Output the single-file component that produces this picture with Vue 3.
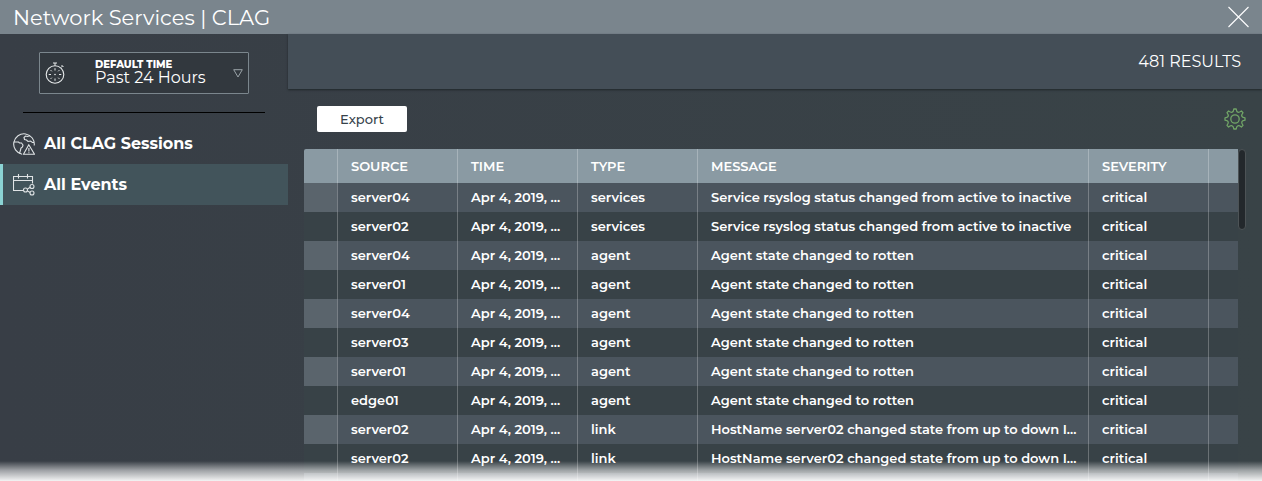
<script setup>
import { ref } from 'vue'

const range = ref('Past 24 Hours')
const columns = ['SOURCE', 'TIME', 'TYPE', 'MESSAGE', 'SEVERITY']
const time = 'Apr 4, 2019, ...'
const rsyslog = 'Service rsyslog status changed from active to inactive'
const rotten = 'Agent state changed to rotten'
const down = 'HostName server02 changed state from up to down I...'
const events = [
  ['server04', time, 'services', rsyslog, 'critical'],
  ['server02', time, 'services', rsyslog, 'critical'],
  ['server04', time, 'agent', rotten, 'critical'],
  ['server01', time, 'agent', rotten, 'critical'],
  ['server04', time, 'agent', rotten, 'critical'],
  ['server03', time, 'agent', rotten, 'critical'],
  ['server01', time, 'agent', rotten, 'critical'],
  ['edge01', time, 'agent', rotten, 'critical'],
  ['server02', time, 'link', down, 'critical'],
  ['server02', time, 'link', down, 'critical'],
  ['', '', '', '', ''],
]
</script>

<template>
  <div class="page">
    <header class="titlebar">
      <h1>Network Services | CLAG</h1>
      <button class="icon-button" aria-label="Close">
        <svg width="22" height="22" viewBox="0 0 22 22" fill="none" stroke="#fff" stroke-width="1.1">
          <path d="M1.500 1l20 20M21.500 1l-20 20" />
        </svg>
      </button>
    </header>

    <div class="body">
      <aside class="sidebar">
        <div class="picker">
          <svg class="clock" width="20" height="24" viewBox="0 0 20 24" fill="none" stroke="#e6e9ea">
            <circle cx="10" cy="13.5" r="8.8" stroke-width="1.1" />
            <path d="M10 4.7V2M8 2h4M16 6.500l1.500-1.500M16.500 4l2 2" />
            <path d="M10 7.200v2.300M10 17.500v2.300M3.700 13.500H6M14 13.500h2.300M5.600 9.100l1.200 1.200M13.200 16.700l1.200 1.200M14.400 9.100l-1.200 1.200M6.800 16.700l-1.200 1.200" />
            <circle cx="10" cy="13.500" r="0.800" fill="#e6e9ea" stroke="none" />
          </svg>
          <div class="picker-text">
            <label for="range">DEFAULT TIME</label>
            <select id="range" v-model="range">
              <option>Past 24 Hours</option>
            </select>
          </div>
          <svg class="arrow" width="10" height="9" viewBox="0 0 10 9" fill="none" stroke="#9aa3a8">
            <path d="M.7.700h8.600L5 8z" />
          </svg>
        </div>
        <nav>
          <a href="#sessions">
            <svg width="22" height="22" viewBox="0 0 22 22" fill="none" stroke="#dfe3e5" stroke-width="1.100">
              <path d="M9 21.200A10.300 10.300 0 1 1 21.200 12.500" />
              <path d="M.8 9h4.700l1 1h2l1.500 2-.5 2-1.500 1-.5 2-1 3.500M17 2.700l-2.500.8-2-.5-1.500 1.500.5 2 2 .5 1.500 1.500 2.500-.5 2 1.500h1.500" />
              <path d="M15.800 11.800L10.500 21.300h11z" />
              <path d="M15.900 15v3.500M15.900 19.200v1" />
            </svg>
            All CLAG Sessions
          </a>
          <a href="#events" class="active" aria-current="page">
            <svg width="22" height="22" viewBox="0 0 22 22" fill="none" stroke="#dfe3e5" stroke-width="1.100">
              <path d="M10 16.500H.5v-14h19v7M.5 6.500h19M5.500 0v4.500M14.500 0v4.500M14.500 15l2.700-1.700M14.500 17l2.700 1.500" />
              <circle cx="12.500" cy="16" r="2" />
              <circle cx="19" cy="12.500" r="2" />
              <circle cx="19" cy="19" r="2" />
            </svg>
            All Events
          </a>
        </nav>
      </aside>

      <main>
        <div class="results">481 RESULTS</div>
        <div class="toolbar">
          <button class="export">Export</button>
          <button class="icon-button" aria-label="Table settings">
            <svg width="22" height="22" viewBox="0 0 22 22" fill="none" stroke="#71a567" stroke-width="1.300" stroke-linejoin="round">
              <path d="M9.800 1h2.400Q12.500 3.800 13.800 4.200Q15 4.700 17.400 3L19 4.600Q17.300 7 17.800 8.200Q18.200 9.500 21 9.800V12.200Q18.200 12.500 17.800 13.800Q17.300 15 19 17.400L17.400 19Q15 17.300 13.800 17.800Q12.500 18.200 12.200 21H9.800Q9.500 18.200 8.200 17.800Q7 17.300 4.600 19L3 17.400Q4.700 15 4.200 13.800Q3.800 12.500 1 12.200V9.800Q3.800 9.500 4.200 8.200Q4.700 7 3 4.600L4.600 3Q7 4.700 8.200 4.200Q9.500 3.800 9.800 1z" />
              <circle cx="11" cy="11" r="4.200" />
            </svg>
          </button>
        </div>
        <div class="table-area">
          <table>
            <colgroup>
              <col class="c-mark" />
              <col class="c-std" />
              <col class="c-std" />
              <col class="c-std" />
              <col />
              <col class="c-std" />
              <col class="c-end" />
            </colgroup>
            <thead>
              <tr>
                <td></td>
                <th v-for="c in columns" :key="c" scope="col">{{ c }}</th>
                <td></td>
              </tr>
            </thead>
            <tbody>
              <tr v-for="(row, i) in events" :key="i">
                <td></td>
                <td v-for="(cell, j) in row" :key="j">{{ cell }}</td>
                <td></td>
              </tr>
            </tbody>
          </table>
          <div class="thumb"></div>
        </div>
      </main>
    </div>
    <div class="fade"></div>
  </div>
</template>

<style>
body {
  margin: 0;
}
</style>

<style scoped>
.page {
  position: relative;
  display: flex;
  flex-direction: column;
  height: 100vh;
  overflow: hidden;
  color: #fff;
  font-family: Montserrat, Inter, "Open Sans", sans-serif;
  background: linear-gradient(90deg, #383e46, #394347);
}
* {
  box-sizing: border-box;
}
button,
select {
  font-family: inherit;
}
.titlebar {
  display: flex;
  flex: none;
  align-items: center;
  justify-content: space-between;
  height: 34px;
  padding: 0 13px;
  background: #7a858d;
}
h1 {
  margin: 0;
  padding-top: 2px;
  font-size: 21px;
  font-weight: 400;
  line-height: 32px;
}
.icon-button {
  display: flex;
  padding: 0;
  border: 0;
  background: none;
  cursor: pointer;
}
.body {
  display: flex;
  flex: 1;
  min-height: 0;
}
.sidebar {
  flex: none;
  width: 288px;
}
.picker {
  display: flex;
  align-items: center;
  width: 210px;
  height: 42px;
  margin: 18px 0 0 39px;
  border: 1px solid #7b868d;
  border-radius: 1px;
  background: #32383e;
}
.clock {
  flex: none;
  margin-left: 5px;
}
.picker-text {
  flex: 1;
  margin-left: 30px;
}
.picker label {
  display: block;
  font-size: 10px;
  font-weight: 800;
  line-height: 10px;
}
.picker select {
  display: block;
  width: 100%;
  height: 16px;
  padding: 0;
  border: 0;
  appearance: none;
  color: #fff;
  background: none;
  font-size: 16px;
  line-height: 16px;
}
.arrow {
  flex: none;
  margin-right: 5px;
}
nav {
  margin-top: 18px;
}
nav::before {
  content: "";
  display: block;
  height: 1px;
  margin: 0 23px 10px;
  background: #000;
}
nav a {
  display: flex;
  align-items: center;
  gap: 9px;
  height: 41px;
  padding-left: 10px;
  border-left: 3px solid transparent;
  color: #fff;
  font-size: 16px;
  font-weight: 700;
  text-decoration: none;
}
nav a.active {
  border-left-color: #8bd3d4;
  background: #42545b;
}
main {
  display: flex;
  flex: 1;
  flex-direction: column;
  min-width: 0;
}
.results {
  flex: none;
  height: 55px;
  padding-right: 21px;
  background: #444e57;
  box-shadow: 0 1px 2px #20272a;
  font-size: 16px;
  line-height: 55px;
  text-align: right;
}
.toolbar {
  display: flex;
  flex: none;
  align-items: center;
  justify-content: space-between;
  height: 60px;
  padding: 0 16px 0 29px;
}
.export {
  width: 90px;
  height: 26px;
  padding: 0;
  border: 0;
  border-radius: 2px;
  color: #36424a;
  background: #fff;
  font-size: 13px;
  font-weight: 500;
}
.table-area {
  display: flex;
  align-items: flex-start;
  padding: 0 16px;
}
table {
  flex: 1;
  width: 100%;
  min-width: 0;
  table-layout: fixed;
  border-spacing: 0;
  border-radius: 2px 0 0 0;
  overflow: hidden;
  font-size: 13px;
  font-weight: 600;
}
.c-mark {
  width: 33px;
}
.c-std {
  width: 120px;
}
.c-end {
  width: 30px;
}
th,
td {
  height: 29px;
  padding: 0 0 1px 13px;
  border-left: 1px solid #ffffff40;
  line-height: 28px;
  text-align: left;
  white-space: nowrap;
}
th:first-child,
td:first-child {
  border-left: 0;
}
thead th,
thead td {
  height: 34px;
  padding-bottom: 0;
  font-weight: 600;
  background: #8a9aa3;
}
tbody tr {
  background: #384247;
}
tbody tr:nth-child(odd) {
  background: #4b555e;
}
tbody tr:nth-child(odd) td:first-child {
  background: #5a646c;
}
.thumb {
  flex: none;
  width: 8px;
  height: 81px;
  border: 1px solid #4d5356;
  border-radius: 4px;
  background: #23282c;
}
.fade {
  position: absolute;
  right: 0;
  bottom: 0;
  left: 0;
  height: 20px;
  background: linear-gradient(#ffffff00, #ffffff80 45%, #fffffff0);
  pointer-events: none;
}
</style>
